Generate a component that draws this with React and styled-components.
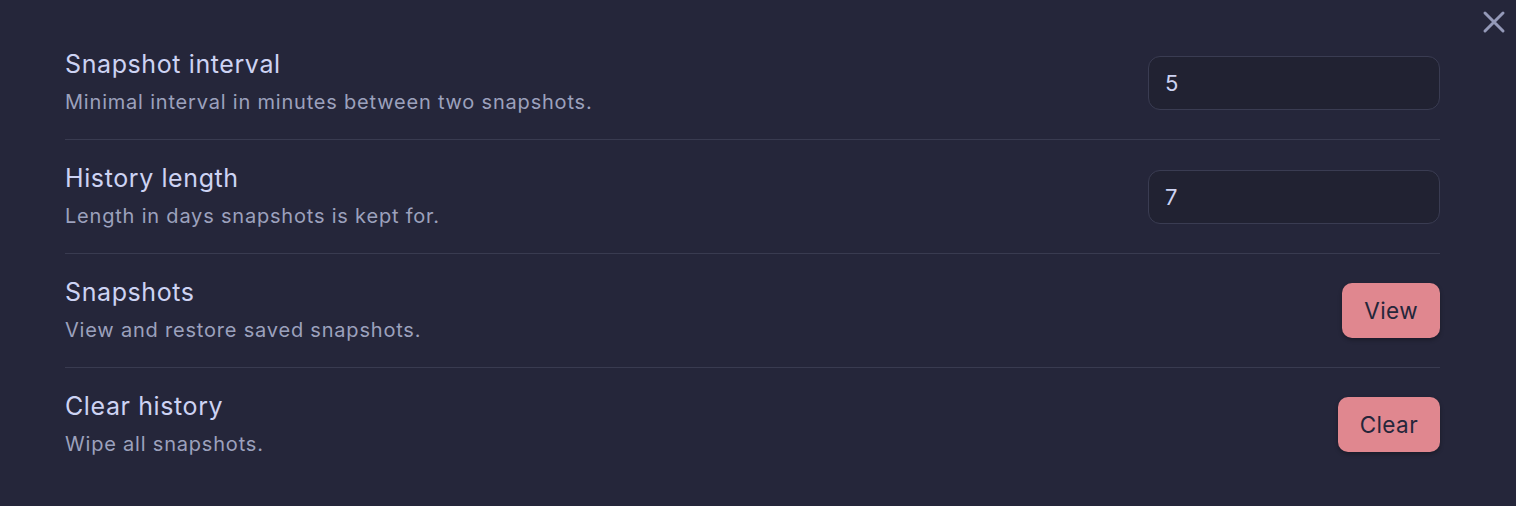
import React from "react";
import styled, { createGlobalStyle } from "styled-components";

const Global = createGlobalStyle`
  html, body { margin: 0; padding: 0; background: #25263a; }
  body { font-family: Inter, "Noto Sans", sans-serif; -webkit-font-smoothing: antialiased; }
`;

const Modal = styled.div`
  position: relative;
  width: 1516px;
  height: 506px;
  background: #25263a;
  box-sizing: border-box;
  padding: 26px 76px 0 65px;
`;

const Close = styled.button`
  position: absolute;
  top: 9px;
  right: 9px;
  width: 26px;
  height: 26px;
  padding: 0;
  border: none;
  background: transparent;
  display: flex;
  align-items: center;
  justify-content: center;
  color: #9499b8;
  cursor: pointer;
`;

const Item = styled.div`
  display: flex;
  align-items: center;
  justify-content: space-between;
  padding: 23px 0;
  border-top: ${(p) => (p.$first ? "none" : "1px solid #393b50")};
`;

const Info = styled.div`
  display: flex;
  flex-direction: column;
  gap: 9px;
`;

const Name = styled.div`
  font-size: 25px;
  line-height: 30px;
  letter-spacing: 0.6px;
  color: #cdd3f3;
`;

const Desc = styled.div`
  font-size: 20px;
  line-height: 28px;
  letter-spacing: 0.8px;
  color: #9ca1bd;
`;

const Input = styled.input`
  width: 292px;
  height: 54px;
  box-sizing: border-box;
  border: 1px solid #3a3c52;
  border-radius: 12px;
  background: #212232;
  color: #cdd3f3;
  font-family: Inter, "Noto Sans", sans-serif;
  font-size: 22px;
  padding: 0 16px;
  outline: none;
`;

const Button = styled.button`
  height: 55px;
  padding: 0 22px;
  border: none;
  border-radius: 10px;
  background: #e0878f;
  color: #25263a;
  font-family: Inter, "Noto Sans", sans-serif;
  font-size: 22.5px;
  letter-spacing: 0.4px;
  box-shadow: 0 2px 4px rgba(0, 0, 0, 0.3);
  cursor: pointer;
`;

const rows = [
  { name: "Snapshot interval", desc: "Minimal interval in minutes between two snapshots.", input: "5" },
  { name: "History length", desc: "Length in days snapshots is kept for.", input: "7" },
  { name: "Snapshots", desc: "View and restore saved snapshots.", button: "View" },
  { name: "Clear history", desc: "Wipe all snapshots.", button: "Clear" },
];

export default function App() {
  return (
    <>
      <Global />
      <Modal>
        <Close aria-label="Close">
          <svg width="24" height="24" viewBox="0 0 24 24" fill="none" stroke="currentColor" strokeWidth="3" strokeLinecap="round">
            <path d="M3 3L21 21M21 3L3 21" />
          </svg>
        </Close>
        {rows.map((r, i) => (
          <Item key={r.name} $first={i === 0}>
            <Info>
              <Name>{r.name}</Name>
              <Desc>{r.desc}</Desc>
            </Info>
            {r.input ? <Input defaultValue={r.input} /> : <Button>{r.button}</Button>}
          </Item>
        ))}
      </Modal>
    </>
  );
}
